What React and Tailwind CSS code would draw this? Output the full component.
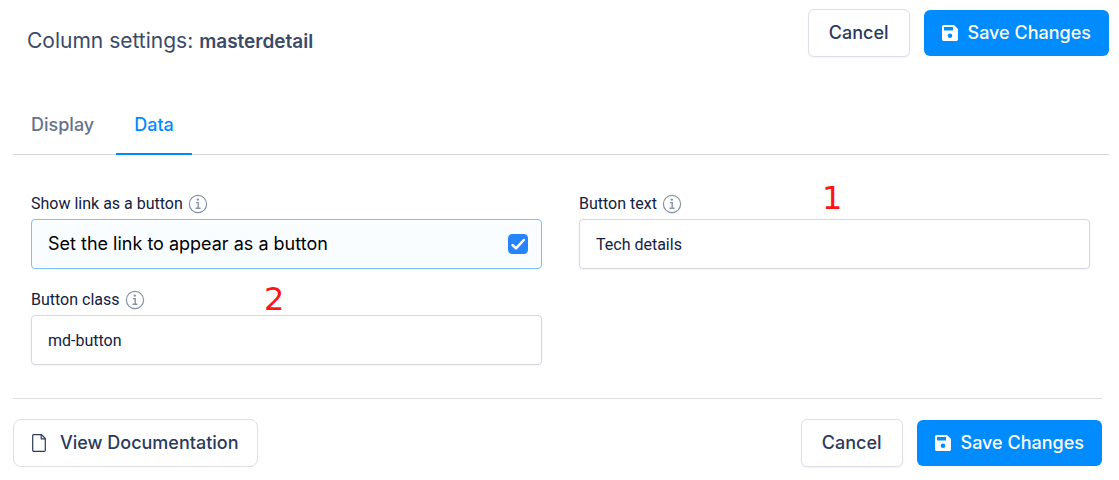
import React, { useState } from 'react';

const SaveIcon = () => (
  <svg viewBox="0 0 16 16" className="w-4 h-4" fill="currentColor" aria-hidden="true">
    <path
      fillRule="evenodd"
      d="M1.8 0H12l4 4v10.2c0 1-.8 1.8-1.8 1.8H1.8C.8 16 0 15.2 0 14.2V1.8C0 .8.8 0 1.8 0zM2 2v3.6h9V2H2zm6 6.500a2.300 2.300 0 1 0 0 4.600 2.300 2.300 0 0 0 0-4.600z"
    />
  </svg>
);

const FileIcon = () => (
  <svg viewBox="0 0 14 18" className="w-3.5 h-[18px]" fill="none" stroke="currentColor" strokeWidth="1.2" strokeLinejoin="round" aria-hidden="true">
    <path d="M1.8.7H9.5L13.3 4.5V16.2a1.1 1.1 0 0 1-1.1 1.1H1.8A1.1 1.1 0 0 1 .7 16.2V1.8A1.1 1.1 0 0 1 1.8.7z" />
    <path d="M9.2.8V4.8H13.2" />
  </svg>
);

const InfoIcon = () => (
  <svg viewBox="0 0 20 20" className="w-5 h-5 text-[#8792a6]" fill="none" stroke="currentColor" aria-hidden="true">
    <circle cx="10" cy="10" r="8.6" strokeWidth="1.2" />
    <circle cx="9.8" cy="5.6" r="1.2" fill="currentColor" stroke="none" />
    <path d="M8 8.6H10.2V14M7.5 14.3H12.5" strokeWidth="1.4" />
  </svg>
);

const CancelButton = () => (
  <button type="button" className="h-12 px-5 rounded-md border border-[#dcdfe6] bg-white text-[#2b3a5c] font-medium shadow-xs">
    Cancel
  </button>
);

const SaveButton = () => (
  <button type="button" className="h-[46px] px-[18px] rounded-md bg-[#008cff] text-white font-medium flex items-center gap-2.5">
    <SaveIcon />
    Save Changes
  </button>
);

const FieldLabel = ({ htmlFor, children }) => (
  <div className="flex items-center gap-[5px] h-6 mb-[3px]">
    <label htmlFor={htmlFor} className="font-[Roboto,sans-serif] text-base text-[#12213f]">
      {children}
    </label>
    <InfoIcon />
  </div>
);

// Numbered callout placed over a field
const Callout = ({ className, children }) => (
  <span className={`absolute font-['DejaVu_Sans',sans-serif] text-[32px] leading-8 text-[#ff1414] ${className}`}>
    {children}
  </span>
);

const TextField = ({ id, label, defaultValue, children }) => (
  <div className="relative">
    <FieldLabel htmlFor={id}>{label}</FieldLabel>
    <input
      id={id}
      type="text"
      defaultValue={defaultValue}
      className="block w-full h-[50px] px-4 rounded border border-[#d5d7e2] bg-white font-[Roboto,sans-serif] text-base text-[#12213f] shadow-xs"
    />
    {children}
  </div>
);

const App = () => {
  const [tab, setTab] = useState('Data');
  const [asButton, setAsButton] = useState(true);

  return (
    <div className="bg-white font-[Inter,sans-serif] text-lg leading-6 pb-3">
      <header className="flex items-start justify-between h-12 mt-[9px] pl-[27px] pr-2.5">
        <h1 className="pt-4 text-[21px] leading-8 text-[#3b4a68]">
          Column settings: <strong className="text-[19px] font-semibold">masterdetail</strong>
        </h1>
        <div className="flex items-center gap-3.5">
          <CancelButton />
          <SaveButton />
        </div>
      </header>

      <nav className="flex gap-1 mt-[38px] ml-[13px] mr-2.5 border-b border-[#d5d7e2]">
        {['Display', 'Data'].map((name) => (
          <button
            key={name}
            type="button"
            onClick={() => setTab(name)}
            className={`h-[60px] px-[18px] pt-0.5 -mb-px border-b-2 font-medium ${
              tab === name ? 'border-[#008cff] text-[#008cff]' : 'border-transparent text-[#66728c]'
            }`}
          >
            {name}
          </button>
        ))}
      </nav>

      <div className="grid grid-cols-2 gap-x-[37px] gap-y-[19px] mt-[37px] pl-[31px] pr-[29px]">
        <div>
          <FieldLabel htmlFor="show-as-button">Show link as a button</FieldLabel>
          <label className="flex items-center justify-between h-[50px] pl-4 pr-[13px] rounded border border-[#7cc0fa] bg-[#f9fdff] text-black">
            Set the link to appear as a button
            <span className="relative w-5 h-5">
              <input
                id="show-as-button"
                type="checkbox"
                checked={asButton}
                onChange={(e) => setAsButton(e.target.checked)}
                className="block appearance-none w-5 h-5 rounded border border-[#2684ff] checked:bg-[#2684ff]"
              />
              {asButton && (
                <svg viewBox="0 0 20 20" className="absolute inset-0 w-5 h-5 pointer-events-none" fill="none" stroke="white" strokeWidth="2.5" strokeLinecap="round" strokeLinejoin="round" aria-hidden="true">
                  <path d="M4.5 11L8 14.3L15.8 6" />
                </svg>
              )}
            </span>
          </label>
        </div>

        <TextField id="button-text" label="Button text" defaultValue="Tech details">
          <Callout className="left-[243px] -top-2.5">1</Callout>
        </TextField>

        <TextField id="button-class" label="Button class" defaultValue="md-button">
          <Callout className="left-[233px] -top-[5px]">2</Callout>
        </TextField>
      </div>

      <footer className="flex items-center justify-between mt-[33px] ml-[13px] mr-[17px] pt-5 border-t border-[#dcdfe6]">
        <a href="#docs" className="flex items-center gap-3.5 h-12 px-[18px] rounded-lg border border-[#dcdfe6] text-[#2b3a5c] font-medium">
          <FileIcon />
          View Documentation
        </a>
        <div className="flex items-center gap-3.5">
          <CancelButton />
          <SaveButton />
        </div>
      </footer>
    </div>
  );
};

export default App;
